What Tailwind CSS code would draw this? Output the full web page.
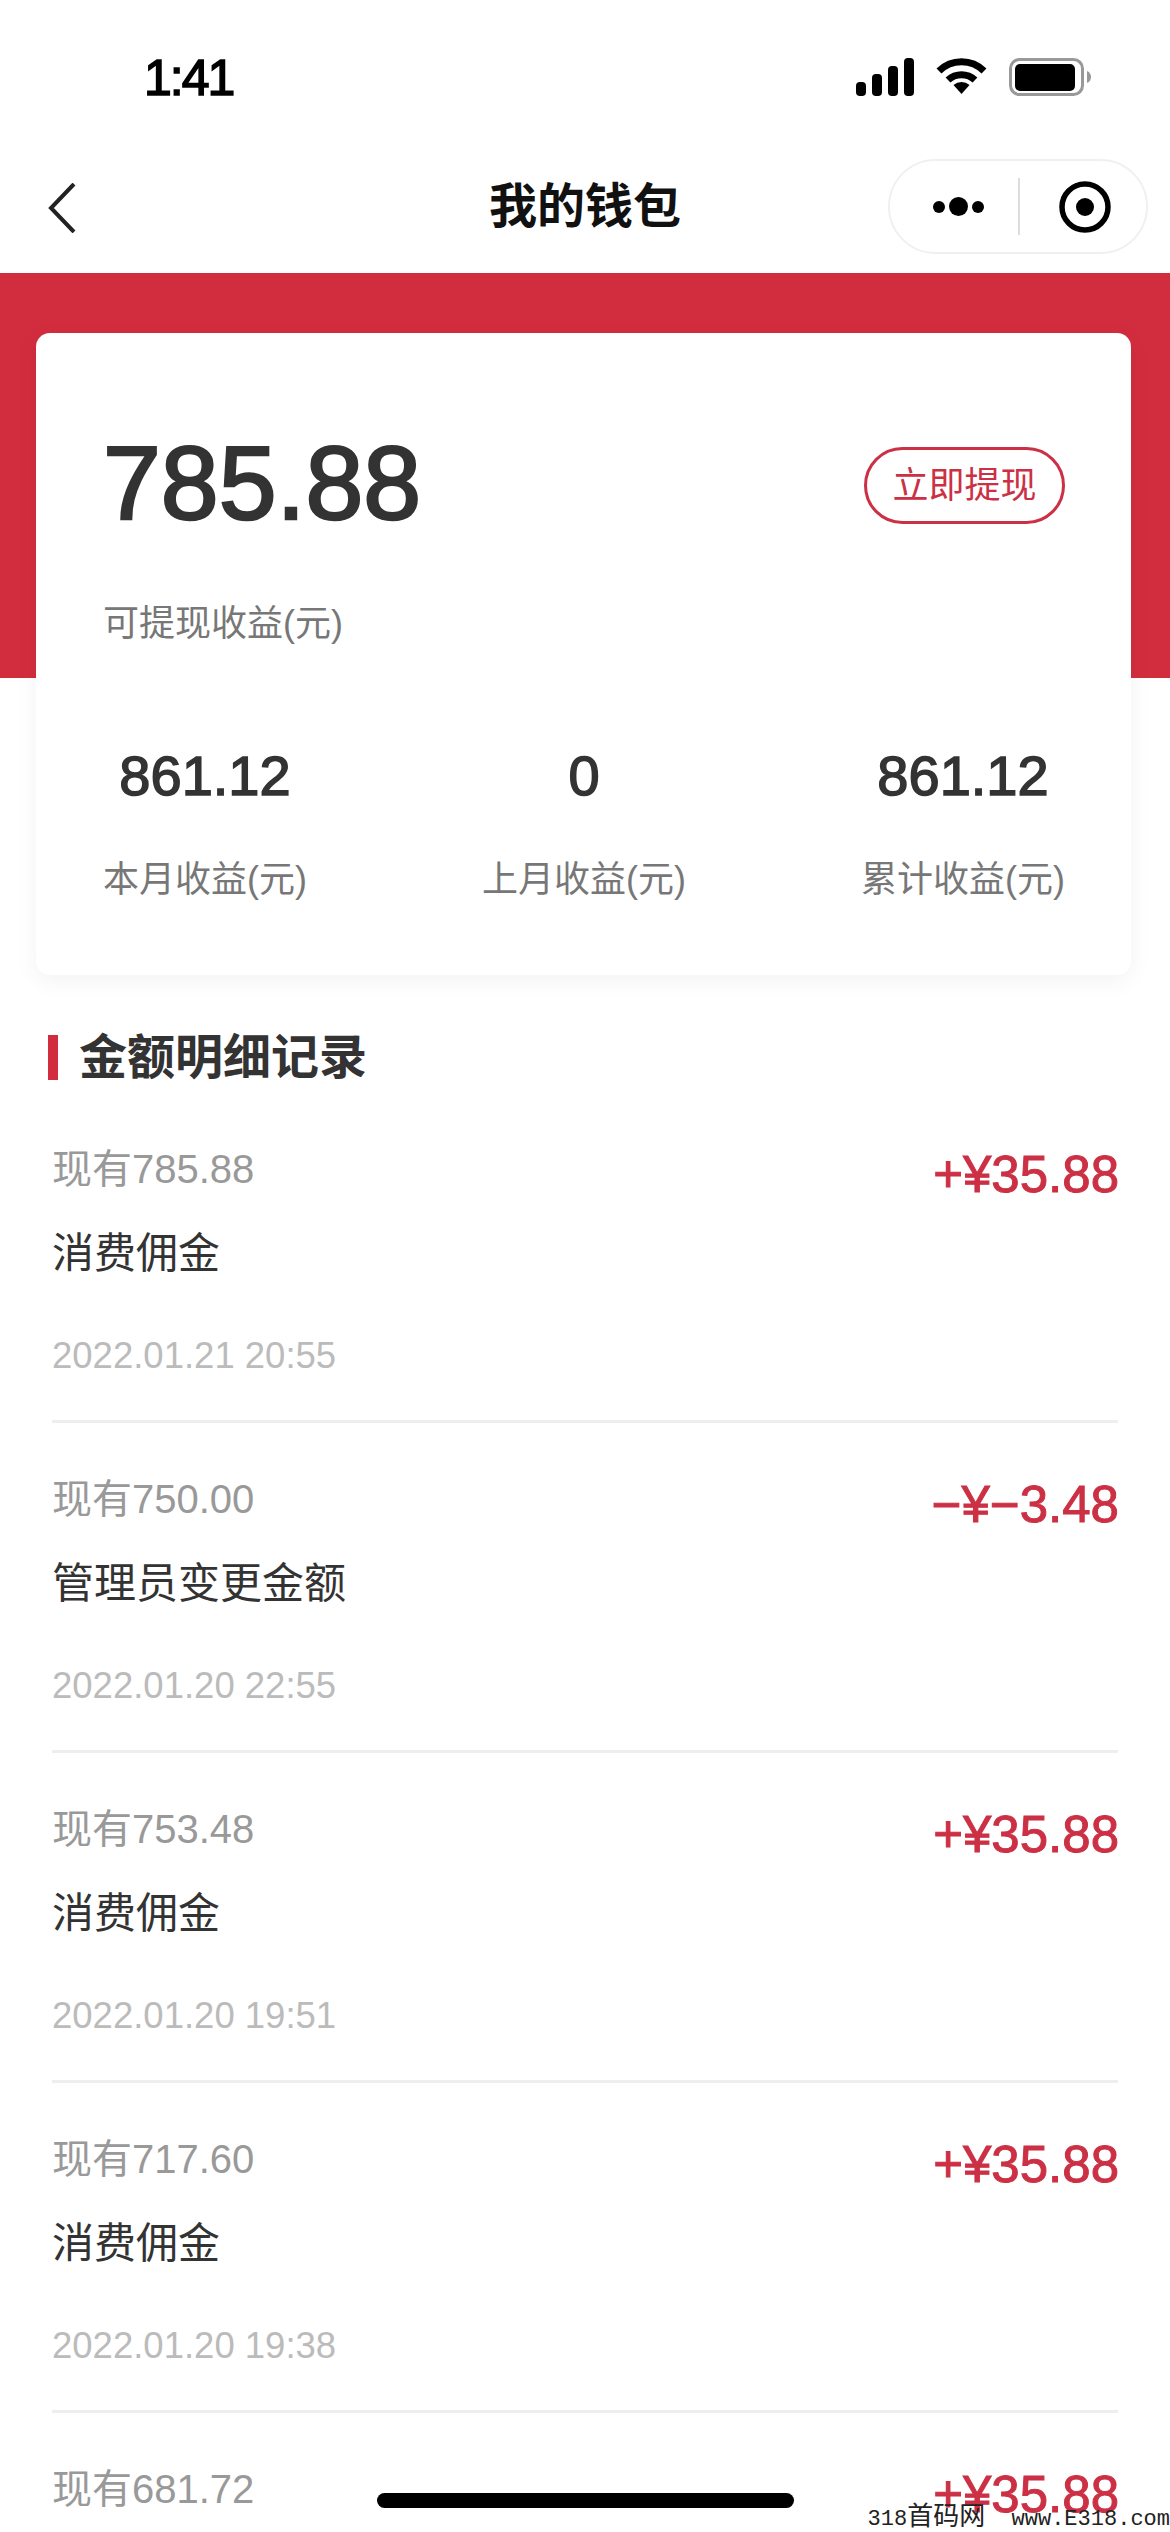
<!DOCTYPE html>
<html lang="zh-CN">

<head>
  <meta charset="UTF-8" />
  <title>我的钱包</title>
  <script src="https://cdn.jsdelivr.net/npm/@tailwindcss/browser@4"></script>
</head>

<body class="relative w-[1170px] h-[2532px] overflow-hidden bg-white font-['Liberation_Sans','Noto_Sans_CJK_SC',sans-serif] text-[#333]">

  <!-- status bar -->
  <div class="h-[120px] flex items-start justify-between pt-[52px] pl-[144px] pr-[79px] text-black">
    <span class="text-[50px] leading-[52px] tracking-[-2px] [-webkit-text-stroke:1.5px_#000]">1:41</span>
    <div class="flex items-center gap-[22px] pt-[6px]">
      <svg width="58" height="38" viewBox="0 0 58 38" fill="#000">
        <rect x="0" y="24" width="10" height="14" rx="4" />
        <rect x="16" y="16" width="10" height="22" rx="4" />
        <rect x="32" y="8" width="10" height="30" rx="4" />
        <rect x="48" y="0" width="10" height="38" rx="4" />
      </svg>
      <svg width="51" height="38" viewBox="0 0 51 38" fill="none" stroke="#000" stroke-width="7">
        <path d="M3 13 A32 32 0 0 1 48 13" />
        <path d="M12 22 A20 20 0 0 1 39 22" />
        <path d="M17.5 27 L25.5 36 L33.5 27 A12 12 0 0 0 17.5 27 Z" fill="#000" stroke="none" />
      </svg>
      <svg width="82" height="38" viewBox="0 0 82 38">
        <rect x="1.5" y="1.5" width="72" height="35" rx="9" fill="none" stroke="#999" stroke-width="3" />
        <rect x="6" y="6" width="60" height="27" rx="5" fill="#000" />
        <path d="M78 13 C81 14 82 17 82 19 C82 21 81 24 78 25 Z" fill="#999" />
      </svg>
    </div>
  </div>

  <!-- nav bar -->
  <div class="h-[153px] grid grid-cols-[1fr_auto_1fr] items-start pl-[48px] pr-[22px] pt-[39px]">
    <svg class="mt-[24px]" width="28" height="50" viewBox="0 0 28 50" fill="none" stroke="#222" stroke-width="4">
      <path d="M26 1 L3 25 L26 49" />
    </svg>
    <span class="text-[48px] leading-[68px] font-bold text-[#111] mt-[14px] ml-[-26px]">我的钱包</span>
    <div class="justify-self-end w-[260px] h-[95px] rounded-full border-2 border-[#f0f0f0] flex items-center">
      <div class="w-[130px] h-[57px] flex items-center justify-center gap-[2px] border-r-2 border-[#ddd] pl-[8px]">
        <span class="w-[12px] h-[12px] rounded-full bg-black"></span>
        <span class="w-[19px] h-[19px] rounded-full bg-black mx-[2px]"></span>
        <span class="w-[12px] h-[12px] rounded-full bg-black"></span>
      </div>
      <div class="flex-1 flex items-center justify-center pl-[3px]">
        <svg width="52" height="52" viewBox="0 0 52 52">
          <circle cx="26" cy="26" r="23" fill="none" stroke="#000" stroke-width="5.5" />
          <circle cx="26" cy="26" r="9" fill="#000" />
        </svg>
      </div>
    </div>
  </div>

  <!-- red band + card -->
  <div class="h-[405px] bg-[#d22d3f] pl-[36px] pr-[39px] pt-[60px]">
    <div class="h-[642px] bg-white rounded-[14px] shadow-[0_6px_24px_rgba(0,0,0,0.05)] pl-[67px] pr-[66px] pt-[95px]">
      <div class="flex items-center justify-between h-[110px]">
        <span class="text-[104px] leading-[110px] [-webkit-text-stroke:2.5px_#333]">785.88</span>
        <button class="w-[201px] h-[77px] mt-[4px] rounded-full border-[3px] border-[#cc3044] text-[#cc3044] text-[36px] leading-[71px]">立即提现</button>
      </div>
      <div class="mt-[59px] text-[36px] leading-[54px] text-[#777]">可提现收益(元)</div>
      <div class="mt-[93px] flex justify-between">
        <div class="flex flex-col items-center">
          <span class="text-[56px] leading-[64px] [-webkit-text-stroke:1.5px_#333]">861.12</span>
          <span class="mt-[45px] text-[36px] leading-[54px] text-[#777]">本月收益(元)</span>
        </div>
        <div class="flex flex-col items-center">
          <span class="text-[56px] leading-[64px] [-webkit-text-stroke:1.5px_#333]">0</span>
          <span class="mt-[45px] text-[36px] leading-[54px] text-[#777]">上月收益(元)</span>
        </div>
        <div class="flex flex-col items-center">
          <span class="text-[56px] leading-[64px] [-webkit-text-stroke:1.5px_#333]">861.12</span>
          <span class="mt-[45px] text-[36px] leading-[54px] text-[#777]">累计收益(元)</span>
        </div>
      </div>
    </div>
  </div>

  <!-- records -->
  <div class="mt-[357px] ml-[48px] flex items-center gap-[21px] h-[45px]">
    <span class="w-[10px] h-[45px] bg-[#d22d3f]"></span>
    <span class="text-[48px] leading-[45px] font-bold">金额明细记录</span>
  </div>

  <div class="mx-[52px] mt-[13px]">
    <div class="h-[330px] pt-[48px] border-b-[3px] border-[#eee] flex justify-between items-start">
      <div class="flex flex-col">
        <span class="text-[40px] leading-[56px] text-[#999]">现有785.88</span>
        <span class="mt-[27px] text-[42px] leading-[60px]">消费佣金</span>
        <span class="mt-[45px] text-[36.5px] leading-[54px] text-[#bbb]">2022.01.21 20:55</span>
      </div>
      <span class="text-[51px] leading-[56px] mt-[6px] mr-[-1px] text-[#cc3044] [-webkit-text-stroke:1px_#cc3044]">+¥35.88</span>
    </div>
    <div class="h-[330px] pt-[48px] border-b-[3px] border-[#eee] flex justify-between items-start">
      <div class="flex flex-col">
        <span class="text-[40px] leading-[56px] text-[#999]">现有750.00</span>
        <span class="mt-[27px] text-[42px] leading-[60px]">管理员变更金额</span>
        <span class="mt-[45px] text-[36.5px] leading-[54px] text-[#bbb]">2022.01.20 22:55</span>
      </div>
      <span class="text-[51px] leading-[56px] mt-[6px] mr-[-1px] text-[#cc3044] [-webkit-text-stroke:1px_#cc3044]">−¥−3.48</span>
    </div>
    <div class="h-[330px] pt-[48px] border-b-[3px] border-[#eee] flex justify-between items-start">
      <div class="flex flex-col">
        <span class="text-[40px] leading-[56px] text-[#999]">现有753.48</span>
        <span class="mt-[27px] text-[42px] leading-[60px]">消费佣金</span>
        <span class="mt-[45px] text-[36.5px] leading-[54px] text-[#bbb]">2022.01.20 19:51</span>
      </div>
      <span class="text-[51px] leading-[56px] mt-[6px] mr-[-1px] text-[#cc3044] [-webkit-text-stroke:1px_#cc3044]">+¥35.88</span>
    </div>
    <div class="h-[330px] pt-[48px] border-b-[3px] border-[#eee] flex justify-between items-start">
      <div class="flex flex-col">
        <span class="text-[40px] leading-[56px] text-[#999]">现有717.60</span>
        <span class="mt-[27px] text-[42px] leading-[60px]">消费佣金</span>
        <span class="mt-[45px] text-[36.5px] leading-[54px] text-[#bbb]">2022.01.20 19:38</span>
      </div>
      <span class="text-[51px] leading-[56px] mt-[6px] mr-[-1px] text-[#cc3044] [-webkit-text-stroke:1px_#cc3044]">+¥35.88</span>
    </div>
    <div class="h-[119px] pt-[48px] flex justify-between items-start">
      <span class="text-[40px] leading-[56px] text-[#999]">现有681.72</span>
      <span class="text-[51px] leading-[56px] mt-[6px] mr-[-1px] text-[#cc3044] [-webkit-text-stroke:1px_#cc3044]">+¥35.88</span>
    </div>
  </div>

  <!-- home indicator -->
  <div class="absolute left-[377px] top-[2493px] w-[417px] h-[15px] rounded-full bg-black"></div>

  <!-- watermark -->
  <div class="absolute right-0 top-[2505px] whitespace-pre text-[22px] leading-[27px] text-[#222] font-['Liberation_Mono','Noto_Sans_CJK_SC',monospace]">318<span class="text-[26px]">首码网</span>  www.E318.com</div>
</body>

</html>
